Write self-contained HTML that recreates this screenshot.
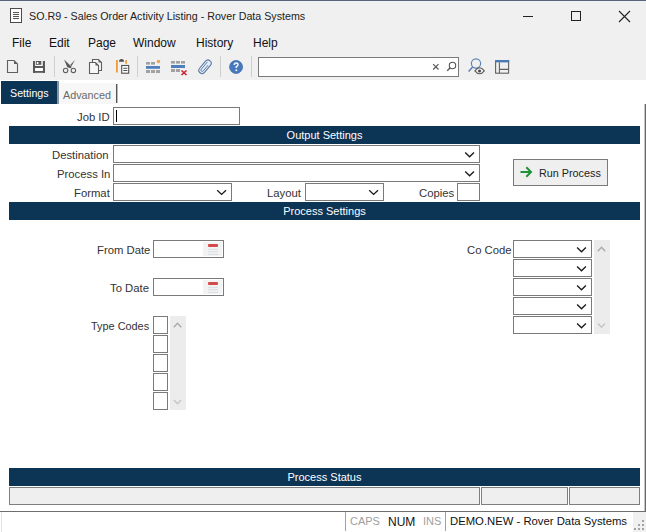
<!DOCTYPE html>
<html><head><meta charset="utf-8">
<style>
*{margin:0;padding:0;box-sizing:border-box}
html,body{width:646px;height:532px;overflow:hidden;background:#fff;font-family:"Liberation Sans",sans-serif;color:#222}
.a{position:absolute}
.t{position:absolute;white-space:pre;line-height:1}
#top{left:0;top:0;width:646px;height:80px;background:#f0f0f0}
#topline{left:0;top:0;width:646px;height:1px;background:#56657a}
.sep{position:absolute;width:1px;background:#c8c8c8}
.inp{position:absolute;border:1px solid #7a7a7a;background:#fff}
.hdr{position:absolute;left:9px;width:631px;height:18px;background:#0c3455;color:#fff;font-size:11px;line-height:18px;text-align:center}
.lbl{position:absolute;white-space:pre;line-height:1;font-size:11.3px;color:#333;text-align:right}
.chev{position:absolute}
</style></head><body>
<div id="top" class="a"></div>
<div id="topline" class="a"></div><div class="a" style="left:0;top:1px;width:646px;height:2px;background:linear-gradient(#eef3fa,#f0f0f0)"></div>
<!-- title icon -->
<div class="a" style="left:10px;top:8px;width:12px;height:15px;border:1px solid #4a4a4a;background:#fff"></div>
<div class="a" style="left:13px;top:12px;width:6px;height:1px;background:#555"></div>
<div class="a" style="left:13px;top:14px;width:6px;height:1px;background:#555"></div>
<div class="a" style="left:13px;top:16px;width:6px;height:1px;background:#555"></div>
<div class="a" style="left:13px;top:18px;width:6px;height:1px;background:#555"></div>
<div class="t" style="left:29px;top:11px;font-size:10.7px;color:#222">SO.R9 - Sales Order Activity Listing - Rover Data Systems</div>
<!-- window buttons -->
<div class="a" style="left:523px;top:16px;width:10px;height:1px;background:#222"></div>
<div class="a" style="left:571px;top:11px;width:10px;height:10px;border:1px solid #222"></div>
<svg class="a" style="left:618px;top:10px" width="13" height="13" viewBox="0 0 13 13"><path d="M1 1L12 12M12 1L1 12" stroke="#222" stroke-width="1.1"/></svg>
<!-- menu -->
<div class="t" style="left:12px;top:37px;font-size:12px;color:#111">File</div>
<div class="t" style="left:49px;top:37px;font-size:12px;color:#111">Edit</div>
<div class="t" style="left:88px;top:37px;font-size:12px;color:#111">Page</div>
<div class="t" style="left:133px;top:37px;font-size:12px;color:#111">Window</div>
<div class="t" style="left:196px;top:37px;font-size:12px;color:#111">History</div>
<div class="t" style="left:253px;top:37px;font-size:12px;color:#111">Help</div>

<!-- toolbar -->
<svg class="a" style="left:0;top:54px" width="520" height="26" viewBox="0 54 520 26">
<g fill="none" stroke="#5f5f5f" stroke-width="1.1">
<path d="M7.5 60.5H14L17.5 64V72.5H7.5Z"/>
</g>
<path d="M14 60.5L17.5 64H14Z" fill="#5f5f5f"/>
<rect x="35" y="61" width="8" height="5.2" fill="#fafafa"/><g fill="#585858"><rect x="33" y="61" width="2.2" height="11.8"/><rect x="42.8" y="61" width="2.2" height="11.8"/><rect x="33" y="66" width="12" height="2"/><rect x="33" y="71" width="12" height="1.8"/><rect x="36" y="61" width="5.3" height="3.8"/></g>
<rect x="35.2" y="68" width="7.6" height="3" fill="#fff"/>
<rect x="36.8" y="62" width="1.6" height="2" fill="#fff"/>
<rect x="54" y="56" width="1" height="21" fill="#cfcfcf"/>
<g fill="none" stroke="#5e5e5e" stroke-width="1.05">
<circle cx="65.6" cy="70.4" r="2.2"/>
<circle cx="73.4" cy="70.4" r="2.2"/>
</g>
<path d="M64.1 59.6L71.9 66.9L70.3 68.2L67.3 67.2Z" fill="#5a5a5a"/>
<path d="M74.9 60.1L71.6 65.9L70.2 65Z" fill="#5a5a5a"/>
<g fill="#f7f7f7" stroke="#5f5f5f" stroke-width="1.1">
<path d="M92.5 59.5H98.5L101.5 62.5V70.5H92.5Z"/>
<path d="M89.5 62.5H95.5L98.5 65.5V73.5H89.5Z"/>
</g>
<path d="M98.5 59.5L101.5 62.5H98.5Z M95.5 62.5L98.5 65.5H95.5Z" fill="#5f5f5f"/>
<path d="M116 60H117.8V72.5H116Z" fill="#ee9a3a"/>
<path d="M125.3 60H127V63.8H125.3Z" fill="#ee9a3a"/>
<path d="M119 61.8Q119 59 121.5 59Q124 59 124 61.8Z" fill="#505050"/>
<rect x="121.7" y="65.5" width="7" height="7.7" fill="#fff" stroke="#4f4f4f" stroke-width="1.1"/>
<path d="M123.3 68.3H127.4M123.3 70.5H127.4" stroke="#4f4f4f" stroke-width="1.1"/>
<rect x="137" y="56" width="1" height="21" fill="#cfcfcf"/>
<g fill="#a2a2a2">
<rect x="146" y="62" width="4" height="2.6"/><rect x="151" y="62" width="4" height="2.6"/>
<rect x="146" y="70" width="4" height="3"/><rect x="151" y="70" width="4" height="3"/><rect x="156" y="70" width="4" height="3"/>
<rect x="171" y="61" width="4" height="2.6"/><rect x="176" y="61" width="4" height="2.6"/><rect x="181" y="61" width="4" height="2.6"/>
<rect x="171" y="69" width="4" height="3"/><rect x="176" y="69" width="4" height="3"/>
</g>
<rect x="146" y="66" width="14" height="2.8" fill="#4f80bd"/>
<rect x="171" y="65" width="14" height="3" fill="#4f80bd"/>
<circle cx="158.5" cy="61.5" r="1.7" fill="#f0a050"/>
<path d="M181.5 70.5L186.5 75M186.5 70.5L181.5 75" stroke="#d02030" stroke-width="1.6"/>
<g transform="rotate(-50 205 66.8)"><rect x="197.2" y="63.6" width="15.6" height="6.4" rx="3.2" fill="#e2eefa" stroke="#5d78a0" stroke-width="1.1"/><path d="M210.3 65.5H200.7A1.3 1.3 0 0 0 200.7 68.1H208.2" fill="none" stroke="#5d78a0" stroke-width="0.9"/></g>
<rect x="220" y="56" width="1" height="21" fill="#cfcfcf"/>
<circle cx="236.05" cy="66.95" r="6.5" fill="#4679be" stroke="#3563a5" stroke-width="0.7"/>
<path d="M234.3 64.9Q234.3 63 236.2 63Q238 63 238 64.7Q238 65.8 236.3 66.6V68.1" fill="none" stroke="#f4f8ff" stroke-width="1.5"/>
<circle cx="236.3" cy="70.2" r="0.95" fill="#f4f8ff"/>
<rect x="251" y="56" width="1" height="21" fill="#cfcfcf"/>
<rect x="258.5" y="57.5" width="200" height="19" fill="#fff" stroke="#7a7a7a" stroke-width="1"/>
<path d="M433.2 64.2L438.5 69.5M438.5 64.2L433.2 69.5" stroke="#555" stroke-width="1.1"/>
<circle cx="452.5" cy="65.5" r="3.2" fill="none" stroke="#555" stroke-width="1.1"/>
<path d="M450.2 67.8L447.2 70.8" stroke="#555" stroke-width="1.3"/>
<circle cx="476" cy="63.5" r="4.6" fill="none" stroke="#5a80b4" stroke-width="1.15"/>
<path d="M472.6 66.9L468.6 71.4" stroke="#5a80b4" stroke-width="1.5"/>
<path d="M474.9 70.8Q479.6 64.8 484.3 70.8Q479.6 76.8 474.9 70.8Z" fill="#f0f0f0" stroke="#5a5a5a" stroke-width="1.1"/>
<circle cx="479.5" cy="70.9" r="1.5" fill="#4a4a4a"/>
<rect x="495.6" y="60.6" width="13" height="12.6" fill="none" stroke="#606060" stroke-width="1.1"/>
<rect x="495" y="60" width="14.2" height="2.4" fill="#4a7ab5"/>
<path d="M499.4 62.4V73M499.4 69.4H508.6" stroke="#606060" stroke-width="1.1"/>
</svg>
<!-- content -->
<div class="a" style="left:644px;top:104px;width:1px;height:407px;background:#c4c4c4"></div><div class="a" style="left:645px;top:104px;width:1px;height:407px;background:#6a6a6a"></div>
<div class="a" style="left:0;top:511px;width:646px;height:1px;background:#6e6e6e"></div>
<div class="a" style="left:0;top:512px;width:646px;height:20px;background:#fff"></div><div class="a" style="left:1px;top:512px;width:1px;height:20px;background:#e4e4e4"></div>

<!-- tabs -->
<div class="a" style="left:1px;top:81px;width:56px;height:23px;background:#0c3455"></div>
<div class="a" style="left:57px;top:81px;width:2px;height:23px;background:#8494a4"></div>
<div class="t" style="left:10px;top:88px;font-size:10.7px;color:#fff">Settings</div>
<div class="a" style="left:59px;top:83px;width:57px;height:21px;background:#f7f7f7"></div>
<div class="t" style="left:63px;top:90px;font-size:10.8px;color:#6a6a6a">Advanced</div>
<div class="a" style="left:116px;top:84px;width:1px;height:19px;background:#555"></div><div class="a" style="left:117px;top:84px;width:1px;height:19px;background:#b8b8b8"></div>

<!-- Job ID -->
<div class="lbl" style="left:77px;top:112px">Job ID</div>
<div class="inp" style="left:113px;top:107px;width:127px;height:18px"></div>
<div class="a" style="left:116px;top:110px;width:1px;height:12px;background:#000"></div>

<div class="hdr" style="top:126px">Output Settings</div>
<div class="lbl" style="left:52px;top:150px">Destination</div>
<div class="inp" style="left:113px;top:145px;width:367px;height:18px"></div>
<div class="lbl" style="left:57px;top:169px">Process In</div>
<div class="inp" style="left:113px;top:164px;width:367px;height:18px"></div>
<div class="lbl" style="left:74px;top:188px">Format</div>
<div class="inp" style="left:113px;top:183px;width:119px;height:18px"></div>
<div class="lbl" style="left:267px;top:188px">Layout</div>
<div class="inp" style="left:305px;top:183px;width:79px;height:18px"></div>
<div class="lbl" style="left:419px;top:188px">Copies</div>
<div class="inp" style="left:457px;top:183px;width:23px;height:18px"></div>

<div class="a" style="left:513px;top:159px;width:95px;height:27px;border:1px solid #7a7a7a;background:#efefef"></div>
<div class="t" style="left:539px;top:168px;font-size:10.8px;color:#222">Run Process</div>

<div class="hdr" style="top:202px">Process Settings</div>

<div class="lbl" style="left:97px;top:245px">From Date</div>
<div class="inp" style="left:153px;top:240px;width:71px;height:18px"></div>
<div class="lbl" style="left:110px;top:283px">To Date</div>
<div class="inp" style="left:153px;top:278px;width:71px;height:18px"></div>
<div class="lbl" style="left:91px;top:321px;font-size:10.9px">Type Codes</div>

<div class="lbl" style="left:467px;top:245px">Co Code</div>

<svg class="a" style="left:0;top:0" width="646" height="532" viewBox="0 0 646 532">
<path d="M465.2 152.5L469.6 156.7L474.0 152.5" fill="none" stroke="#1a1a1a" stroke-width="1.35"/>
<path d="M465.2 171.5L469.6 175.7L474.0 171.5" fill="none" stroke="#1a1a1a" stroke-width="1.35"/>
<path d="M217.2 190.2L221.6 194.4L226.0 190.2" fill="none" stroke="#1a1a1a" stroke-width="1.35"/>
<path d="M369.2 190.2L373.6 194.4L378.0 190.2" fill="none" stroke="#1a1a1a" stroke-width="1.35"/>
<rect x="513.5" y="240.5" width="78" height="17" fill="#fff" stroke="#7a7a7a"/>
<path d="M577.1 247.5L581.5 251.7L585.9 247.5" fill="none" stroke="#1a1a1a" stroke-width="1.35"/>
<rect x="513.5" y="259.5" width="78" height="17" fill="#fff" stroke="#7a7a7a"/>
<path d="M577.1 266.5L581.5 270.7L585.9 266.5" fill="none" stroke="#1a1a1a" stroke-width="1.35"/>
<rect x="513.5" y="278.5" width="78" height="17" fill="#fff" stroke="#7a7a7a"/>
<path d="M577.1 285.5L581.5 289.7L585.9 285.5" fill="none" stroke="#1a1a1a" stroke-width="1.35"/>
<rect x="513.5" y="297.5" width="78" height="17" fill="#fff" stroke="#7a7a7a"/>
<path d="M577.1 304.5L581.5 308.7L585.9 304.5" fill="none" stroke="#1a1a1a" stroke-width="1.35"/>
<rect x="513.5" y="316.5" width="78" height="17" fill="#fff" stroke="#7a7a7a"/>
<path d="M577.1 323.5L581.5 327.7L585.9 323.5" fill="none" stroke="#1a1a1a" stroke-width="1.35"/>
<rect x="594" y="240" width="16" height="94" fill="#ececec"/>
<path d="M597.8 251.2L601.5 247.2L605.2 251.2" fill="none" stroke="#aaaaaa" stroke-width="1.4"/>
<path d="M598 323.5L601.5 327.2L605 323.5" fill="none" stroke="#c4c4c4" stroke-width="1.3"/>
<rect x="153.5" y="316.5" width="14" height="17" fill="#fff" stroke="#7a7a7a"/>
<rect x="153.5" y="335.5" width="14" height="17" fill="#fff" stroke="#7a7a7a"/>
<rect x="153.5" y="354.5" width="14" height="17" fill="#fff" stroke="#7a7a7a"/>
<rect x="153.5" y="373.5" width="14" height="17" fill="#fff" stroke="#7a7a7a"/>
<rect x="153.5" y="392.5" width="14" height="17" fill="#fff" stroke="#7a7a7a"/>
<rect x="170" y="316" width="16" height="94" fill="#ececec"/>
<path d="M173.8 327.2L177.5 323.2L181.2 327.2" fill="none" stroke="#aaaaaa" stroke-width="1.4"/>
<path d="M174 400L177.5 403.7L181 400" fill="none" stroke="#c4c4c4" stroke-width="1.3"/>
<rect x="203" y="242" width="19" height="14" fill="#f3f3f3"/>
<rect x="208" y="244" width="10" height="3" rx="1" fill="#d44a4a"/>
<path d="M208 249.3H218M208 251.7H218M208 254.3H218" stroke="#d6dde2" stroke-width="1"/>
<rect x="203" y="280" width="19" height="14" fill="#f3f3f3"/>
<rect x="208" y="282" width="10" height="3" rx="1" fill="#d44a4a"/>
<path d="M208 287.3H218M208 289.7H218M208 292.3H218" stroke="#d6dde2" stroke-width="1"/>
<path d="M520.5 172H531M526.3 167.3L531 172L526.3 176.7" fill="none" stroke="#23913a" stroke-width="2"/>
</svg>
<div class="hdr" style="top:468px">Process Status</div>
<div class="a" style="left:9px;top:487px;width:471px;height:18px;border:1px solid #7e7e7e;background:#efefef"></div>
<div class="a" style="left:481px;top:487px;width:87px;height:18px;border:1px solid #7e7e7e;background:#efefef"></div>
<div class="a" style="left:569px;top:487px;width:71px;height:18px;border:1px solid #7e7e7e;background:#efefef"></div>

<!-- status bar -->
<div class="a" style="left:345px;top:512px;width:1px;height:19px;background:#a0a0a0"></div>
<div class="a" style="left:445px;top:512px;width:1px;height:19px;background:#a0a0a0"></div>
<div class="t" style="left:350px;top:516px;font-size:11px;color:#a0a0a0">CAPS</div>
<div class="t" style="left:388px;top:516px;font-size:12px;color:#111">NUM</div>
<div class="t" style="left:423px;top:516px;font-size:11px;color:#a0a0a0">INS</div>
<div class="t" style="left:450px;top:516px;font-size:11.3px;color:#111">DEMO.NEW - Rover Data Systems</div>
<div class="a" style="left:633px;top:512px;width:13px;height:20px;background:#f0f0f0"></div>
<svg class="a" style="left:630px;top:516px" width="16" height="16" viewBox="630 516 16 16" fill="#a4a4a4">
<rect x="642" y="520" width="2" height="2"/><rect x="638" y="524" width="2" height="2"/><rect x="642" y="524" width="2" height="2"/>
<rect x="634" y="528" width="2" height="2"/><rect x="638" y="528" width="2" height="2"/><rect x="642" y="528" width="2" height="2"/>
</svg>
</body></html>
